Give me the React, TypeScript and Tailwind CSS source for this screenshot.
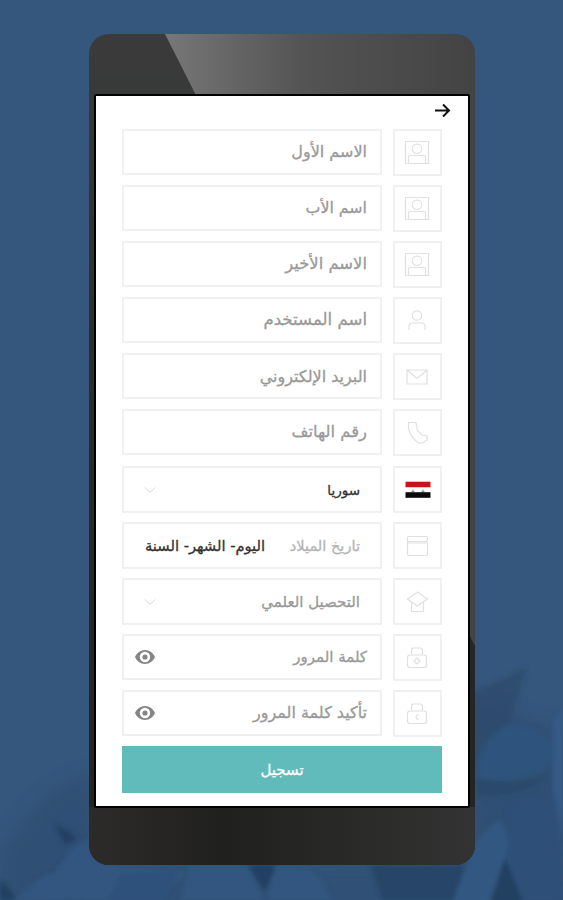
import type { ReactNode } from "react";

type FieldProps = {
  icon: ReactNode;
  children: ReactNode;
  select?: boolean;
};

function LineIcon({ children }: { children: ReactNode }) {
  return (
    <svg
      className="relative right-px"
      width="26"
      height="26"
      viewBox="0 0 26 26"
      fill="none"
      stroke="#e0e0e0"
      strokeWidth="1.2"
    >
      {children}
    </svg>
  );
}

function CardIcon() {
  return (
    <LineIcon>
      <path d="M1.500 1.500h23v22h-23z" />
      <circle cx="13" cy="8.800" r="4.700" />
      <path d="M4.500 23.500V17q0-1.500 1.500-1.500h14q1.500 0 1.500 1.500v6.500" />
    </LineIcon>
  );
}

function UserIcon() {
  return (
    <LineIcon>
      <circle cx="13" cy="7.500" r="4.700" />
      <path d="M5 22v-3.500q0-3.500 3.500-3.500h9q3.500 0 3.500 3.500V22" />
    </LineIcon>
  );
}

function MailIcon() {
  return (
    <LineIcon>
      <path d="M3 6h20v14H3zM3.500 6.500l9.500 8 9.500-8" />
    </LineIcon>
  );
}

function PhoneIcon() {
  return (
    <LineIcon>
      <path d="M4.500 2.500h7.500l1.500 8 4.500 4.500 5.500 1.200-.5 3.800-4.500 3h-3.500Q6.500 17.500 4.500 9z" />
    </LineIcon>
  );
}

function FlagIcon() {
  return (
    <svg width="26" height="18" viewBox="0 0 26 18">
      <path fill="#c81419" d="M.5.700h25v5.800H.500z" />
      <path fill="#fff" d="M.5 6.500h25v4.700H.500z" />
      <path fill="#0a0a0a" d="M.5 11.200h25v5.600H.500z" />
      <path
        stroke="#8a8a8a"
        strokeWidth="1"
        d="M8 8.500v2.500M18 8.500v2.500M6.500 10.500h3M16.500 10.500h3"
      />
    </svg>
  );
}

function CalendarIcon() {
  return (
    <LineIcon>
      <path d="M5 3.500h18q1.500 2-.5 4.500 1 .5 1 2v11q0 1.500-1.500 1.500H5q-1.500 0-1.500-1.500V5q0-1.500 1.500-1.500z" />
      <path d="M3.500 10h19M4 8.500h18.500" />
    </LineIcon>
  );
}

function GraduationIcon() {
  return (
    <LineIcon>
      <path d="M13.500 3 3.500 10l10 7 10-7zM7.500 13v9.500h12V13" />
    </LineIcon>
  );
}

function LockIcon({ check }: { check?: boolean }) {
  return (
    <LineIcon>
      <path d="M7.500 9.500V5q0-2 2-2h7q2 0 2 2v4.500" />
      <rect x="3.500" y="10" width="19" height="12.500" rx="2.500" />
      {check ? (
        <path d="M14 13q-4 3 0 6" />
      ) : (
        <path d="m13 13 3 3-3 3-3-3z" />
      )}
    </LineIcon>
  );
}

function Chevron() {
  return (
    <svg
      className="relative right-px"
      width="12"
      height="8"
      viewBox="0 0 12 8"
      fill="none"
      stroke="#d4d4d4"
    >
      <path d="m1 1.500 5 5 5-5" />
    </svg>
  );
}

function Eye() {
  return (
    <svg width="20" height="14" viewBox="0 0 20 14" fill="#858585">
      <path
        fillRule="evenodd"
        d="M10 0C5.500 0 1.700 2.900 0 7c1.700 4.100 5.500 7 10 7s8.300-2.900 10-7c-1.700-4.100-5.500-7-10-7zm0 12.200a5.200 5.200 0 1 1 0-10.400 5.200 5.200 0 0 1 0 10.400z"
      />
      <circle cx="10" cy="7" r="2.600" />
    </svg>
  );
}

function Field({ icon, children, select }: FieldProps) {
  return (
    <div className="flex h-[47px] items-start justify-between">
      <div className="flex h-full w-[49px] items-center justify-center border-2 border-[#f0f0f0]">
        {icon}
      </div>
      <div
        className={
          select
            ? "flex h-[47px] w-[260px] items-center justify-between border-2 border-[#f0f0f0] pr-5 pl-[21px]"
            : "flex h-[46px] w-[260px] items-center justify-between border-2 border-[#f0f0f0] pr-[13px] pl-[11px]"
        }
      >
        {children}
      </div>
    </div>
  );
}

function Backdrop() {
  return (
    <svg
      className="absolute inset-0"
      width="563"
      height="900"
      viewBox="0 0 563 900"
    >
      <defs>
        <filter id="soft" x="-10%" y="-10%" width="120%" height="120%">
          <feGaussianBlur stdDeviation="2" />
        </filter>
        <filter id="haze" x="-20%" y="-20%" width="140%" height="140%">
          <feGaussianBlur stdDeviation="8" />
        </filter>
      </defs>
      <g filter="url(#haze)" fill="#2c4b6f">
        <path d="M95 772Q50 785 25 820L0 850v50h70l30-60z" opacity=".7" />
        <path d="M475 700l55 20 33 10v180h-75l-20-60z" opacity=".7" />
        <path d="M60 866h420v50H60z" opacity=".6" />
      </g>
      <g filter="url(#soft)">
        <path
          fill="#2c4a6b"
          d="M465 697l61-29-22 73-28 30-11-5z"
          opacity=".75"
        />
        <path
          fill="#2f527c"
          d="M476 766q6-30 34-43 30 2 42 18l8 12-20 20-60 15z"
        />
        <path fill="#2b496c" d="M474 778q40 8 74-2-26 22-70 20z" />
        <path fill="#2d4f78" d="M508 806q20-10 46-14l9 110h-45l-16-44z" />
        <path fill="#345a86" d="M553 720l10-12v130l-10-48z" />
        <path fill="#335982" d="M478 838l20-18q12 10 8 34l-18 50h-36z" />
        <path fill="#243f61" d="M505 858l18 44h-32z" />
        <path fill="#274468" d="M370 865h95l-12 35h-70z" />
        <path
          fill="#243f62"
          d="M248 865h30l-14 26zM55 824q14 6 22 15l-12 6z"
        />
        <path
          fill="#315680"
          d="M18 900q16-22 38-28 14-28 36-34l24 28 70 6-28 28z"
        />
        <path fill="#2e517b" d="M120 874l60-4-16 30h-56z" />
        <path
          fill="#32567f"
          d="M190 866h58l16 34h-84zM275 866q30-2 44 10l14 24h-66z"
        />
        <path fill="#243f61" d="M0 880l16 16-3 4H0z" />
      </g>
    </svg>
  );
}

function Phone({ children }: { children: ReactNode }) {
  return (
    <div className="relative ml-[89px] h-[831px] w-[386px] overflow-hidden rounded-[20px] bg-linear-to-b from-[#3b3b3b] via-[#272b2b] to-[#242321] px-[5px] pt-[60px]">
      <div className="absolute inset-0 bg-linear-to-r from-[#777] from-[20%] via-[#545454] via-[55%] to-[#434343] [clip-path:polygon(76px_0,100%_0,100%_612px)]" />
      <div className="absolute inset-x-0 bottom-0 h-[58px] bg-linear-to-r from-[#2d2b29] via-[#20201e] via-[35%] to-[#333]" />
      <div className="relative h-[714px] rounded-[2px] border-2 border-black bg-white">
        {children}
      </div>
    </div>
  );
}

function App() {
  return (
    <main className="relative h-[900px] w-[563px] overflow-hidden bg-[#35577d] pt-[34px] font-['DejaVu_Sans',sans-serif] text-[15px] leading-none whitespace-nowrap text-[#999]">
      <Backdrop />
      <Phone>
        <header className="flex h-[33px] justify-end pt-[7px] pr-[17px]">
          <svg
            width="16"
            height="15"
            viewBox="0 0 16 15"
            fill="none"
            stroke="#111"
            strokeWidth="2"
          >
            <path d="M0 7.500h14M8 1.500l6 6-6 6" />
          </svg>
        </header>
        <form
          dir="rtl"
          className="mr-[26px] ml-[26px] flex flex-col gap-[9px] [-webkit-text-stroke:0.3px]"
        >
          <Field icon={<CardIcon />}>
            <span className="text-[16px]">الاسم الأول</span>
          </Field>
          <Field icon={<CardIcon />}>
            <span className="text-[15.800px]">اسم الأب</span>
          </Field>
          <Field icon={<CardIcon />}>
            <span className="text-[16.400px]">الاسم الأخير</span>
          </Field>
          <Field icon={<UserIcon />}>
            <span className="pt-px text-[16.600px]">اسم المستخدم</span>
          </Field>
          <Field icon={<MailIcon />}>
            <span className="pt-px text-[16px]">البريد الإلكتروني</span>
          </Field>
          <Field icon={<PhoneIcon />}>
            <span className="pt-px text-[16.400px]">رقم الهاتف</span>
          </Field>
          <div className="flex flex-col gap-[9px] pt-px">
            <Field icon={<FlagIcon />} select>
              <span className="pt-0.5 text-[13.500px] text-[#333]">سوريا</span>
              <Chevron />
            </Field>
            <Field icon={<CalendarIcon />} select>
              <span className="pt-px text-[14.600px] text-[#b4b4b4]">
                تاريخ الميلاد
              </span>
              <span className="pt-px text-[14.700px] text-[#333]">
                اليوم- الشهر- السنة
              </span>
            </Field>
            <Field icon={<GraduationIcon />} select>
              <span className="pt-0.5">التحصيل العلمي</span>
              <Chevron />
            </Field>
            <Field icon={<LockIcon />}>
              <span>كلمة المرور</span>
              <Eye />
            </Field>
            <Field icon={<LockIcon check />}>
              <span className="text-[16px]">تأكيد كلمة المرور</span>
              <Eye />
            </Field>
            <button
              type="button"
              className="flex h-[47px] items-center justify-center bg-[#62bbbb] pt-0.5 text-white"
            >
              تسجيل
            </button>
          </div>
        </form>
      </Phone>
    </main>
  );
}

export default App;
